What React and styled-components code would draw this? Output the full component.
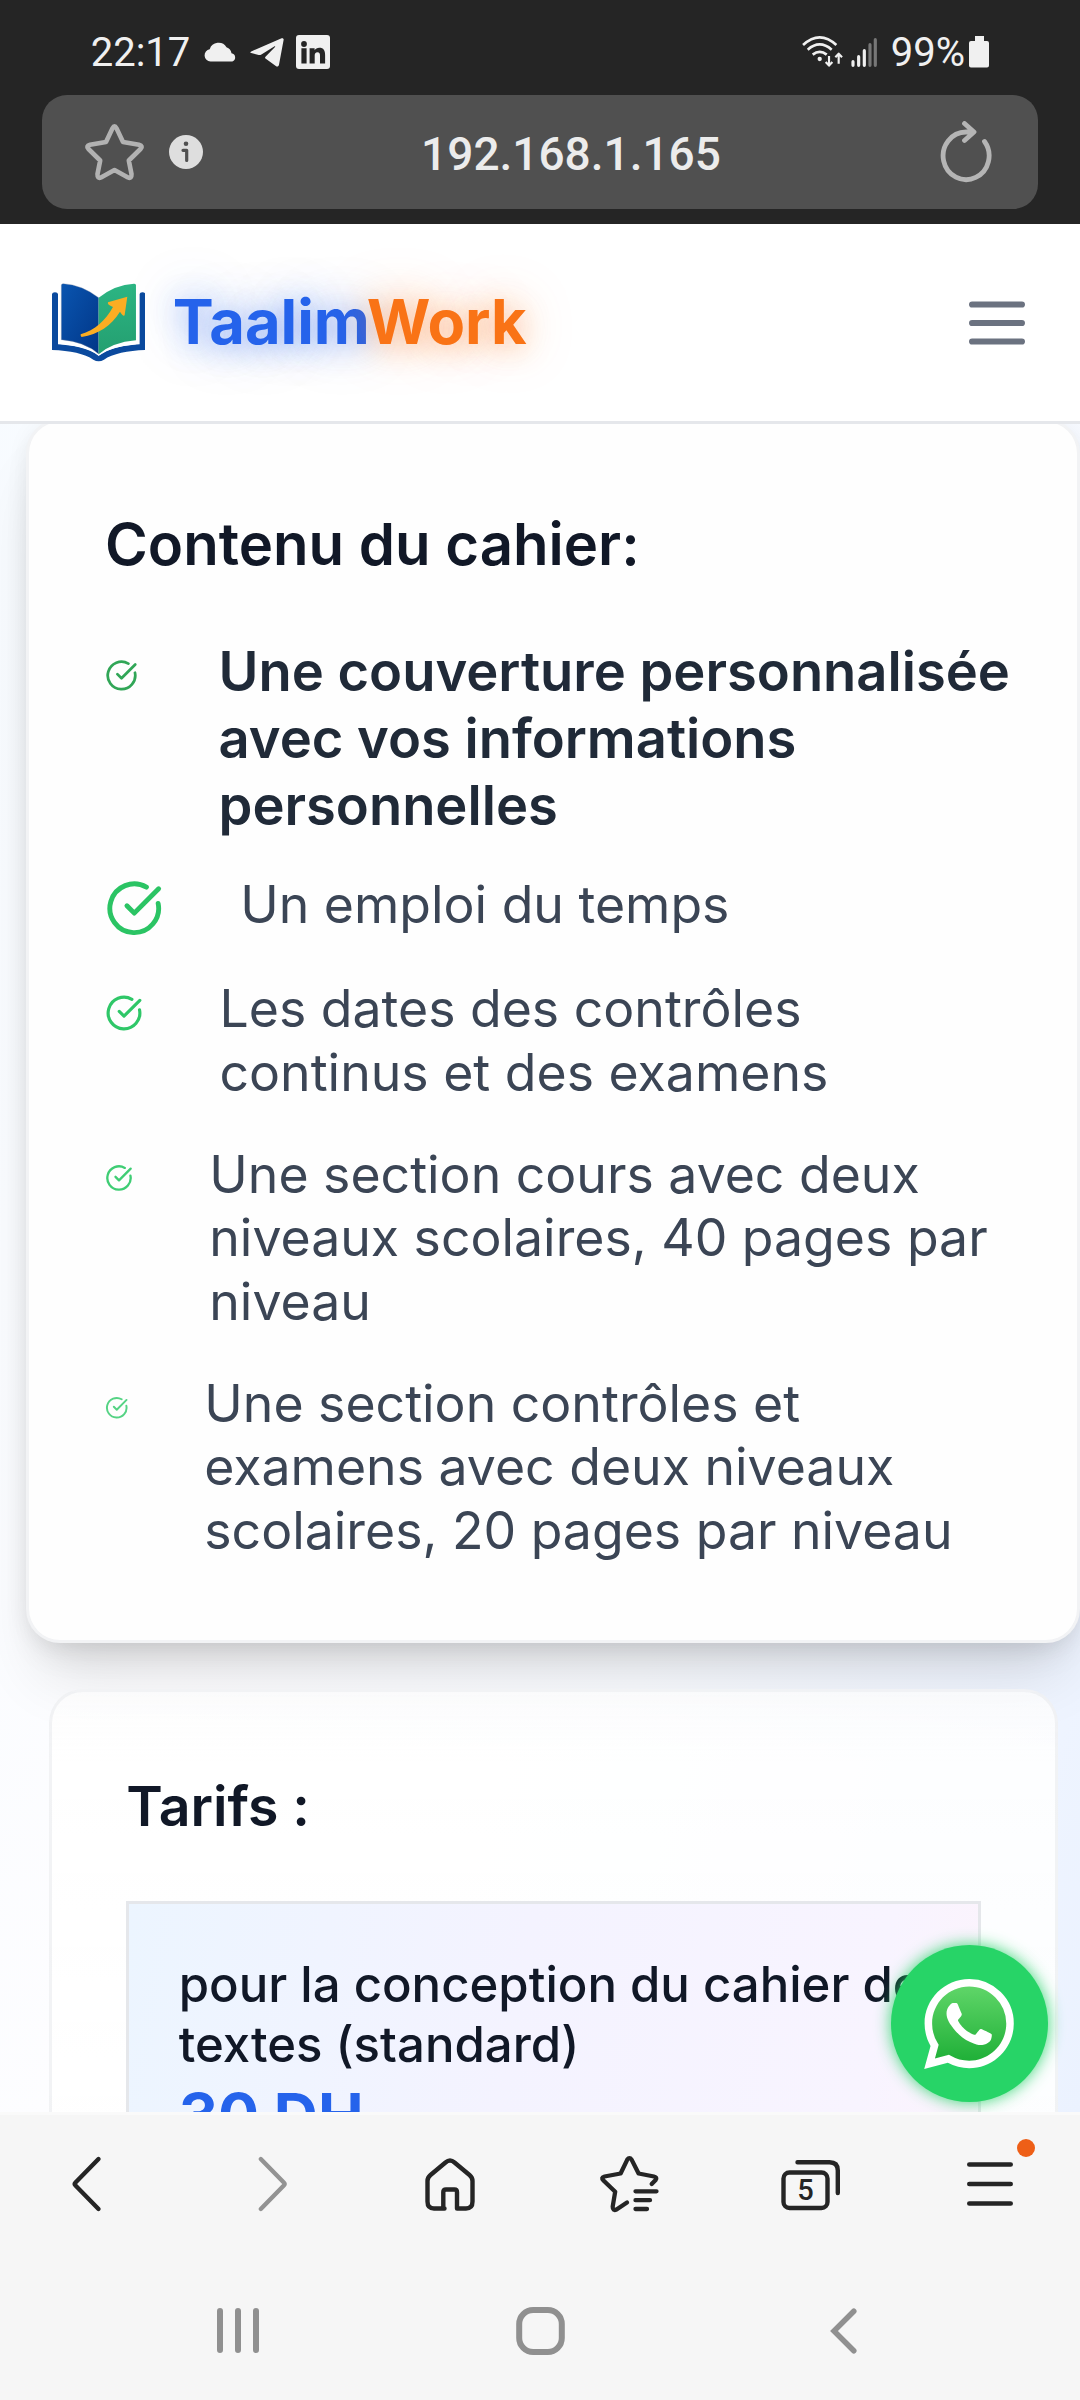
import React from "react";
import styled, { createGlobalStyle } from "styled-components";
import { CircleCheckBig } from "lucide-react";

const Global = createGlobalStyle`
  * { box-sizing: border-box; }
  body { margin: 0; background: #f6f6f6; }
  h3, p, ul { margin: 0; padding: 0; }
  svg { display: block; flex: none; }
`;

const Phone = styled.div`
  width: 1080px;
  height: 2400px;
  display: flex;
  flex-direction: column;
  overflow: hidden;
  background: #f6f6f6;
  font-family: Inter, "Liberation Sans", sans-serif;
`;

/* ---------- browser top ---------- */
const Chrome = styled.header`
  height: 224px;
  flex: none;
  background: #252525;
  font-family: Roboto, "Liberation Sans", sans-serif;
`;
const StatusBar = styled.div`
  height: 95px;
  padding: 9px 91px 0 90.7px;
  display: flex;
  align-items: center;
  justify-content: space-between;
  color: #f0f0f0;
  font-size: 40px;
  line-height: 47px;
`;
const StatusGroup = styled.div`
  display: flex;
  align-items: center;
  gap: ${(p) => p.$gap}px;
`;
const Clock = styled.span`
  margin-right: 2px;
`;
const Percent = styled.span`
  margin: 0 -6px 0 2px;
`;
const AddressBar = styled.div`
  height: 114px;
  margin: 0 42px;
  padding: 0 46px 0 42px;
  border-radius: 25px;
  background: #505050;
  display: grid;
  grid-template-columns: 120px 1fr 120px;
  align-items: center;
`;
const AddressIcons = styled.div`
  display: flex;
  align-items: center;
  gap: 24px;
`;
const Url = styled.span`
  padding: 3px 0 0 66px;
  color: #ececec;
  font-size: 46px;
  font-weight: 500;
  line-height: 54px;
  text-align: center;
`;
const Reload = styled.div`
  display: flex;
  justify-content: flex-end;
`;

/* ---------- web page ---------- */
const Viewport = styled.main`
  position: relative;
  height: 1888px;
  flex: none;
  overflow: hidden;
  background: linear-gradient(105deg, #f7fbff 0%, #fdfdff 35%, #f9fbff 65%, #ebf2ff 100%);
`;
const Nav = styled.nav`
  position: relative;
  z-index: 1;
  height: 200px;
  padding: 0 55px 0 52px;
  border-bottom: 3px solid #e5e7eb;
  background: #fff;
  display: flex;
  align-items: center;
  justify-content: space-between;
`;
const Brand = styled.div`
  display: flex;
  align-items: center;
  gap: 27.5px;
`;
const BrandName = styled.span`
  margin-top: -2px;
  font-size: 61.4px;
  line-height: 76px;
  font-weight: 700;
  white-space: nowrap;
`;
const BrandPart = styled.span`
  color: ${(p) => p.$color};
  text-shadow: 0 0 52px ${(p) => p.$glow}, 0 4px 28px ${(p) => p.$glow};
`;
const Card = styled.section`
  position: relative;
  width: ${(p) => p.$width}px;
  margin: ${(p) => p.$margin};
  padding: ${(p) => p.$padding};
  border: 3px solid rgba(229, 231, 235, 0.5);
  border-radius: 34px;
  background: ${(p) => (p.$raised ? "#fefefe" : "linear-gradient(#fcfcfccc, #ffffffd9 70px, #ffffffe0)")};
  box-shadow: ${(p) =>
    p.$raised
      ? "0 46px 64px -16px rgba(0,0,0,.12), 0 18px 36px -14px rgba(0,0,0,.12), 0 2px 22px rgba(0,0,0,.05)"
      : "none"};
`;
const Title = styled.h3`
  color: #111827;
  font-size: ${(p) => p.$size}px;
  line-height: ${(p) => p.$line}px;
  font-weight: 600;
`;
const Contents = styled.ul`
  margin-top: 58.9px;
  list-style: none;
`;
const Entry = styled.li`
  display: flex;
  align-items: flex-start;
  margin-bottom: ${(p) => p.$after}px;
  color: ${(p) => (p.$strong ? "#202a38" : "#3b4555")};
  font-size: ${(p) => (p.$strong ? 54.3 : 51.75)}px;
  line-height: ${(p) => (p.$strong ? 67.2 : 63.4)}px;
  font-weight: ${(p) => (p.$strong ? 600 : 400)};
`;
const Check = styled.span`
  width: ${(p) => p.$column}px;
  height: 63px;
  margin-top: ${(p) => p.$drop}px;
  flex: none;
  display: flex;
  align-items: center;
  color: ${(p) => p.$color};
`;
const PriceBox = styled.div`
  height: 300px;
  margin-top: 61.2px;
  padding: 50px 40px 0 49.5px;
  border: 3px solid #e5e7eb;
  background: linear-gradient(100deg, #ecf5ff, #f4f3ff 45%, #f8f4ff 85%, #fcf3fc);
`;
const PriceLabel = styled.p`
  color: #111827;
  font-size: 49.1px;
  line-height: 60px;
  font-weight: 500;
`;
const Price = styled.p`
  margin-top: 7px;
  color: #2563eb;
  font-size: 61.1px;
  line-height: 68px;
  font-weight: 700;
`;
const ChatButton = styled.button`
  position: absolute;
  left: 890.5px;
  top: 1721px;
  width: 157px;
  height: 157px;
  padding: 0;
  border: 0;
  border-radius: 50%;
  background: #27d467;
  box-shadow: 0 0 16px rgba(37, 211, 102, 0.9);
  display: flex;
  align-items: center;
  justify-content: center;
`;

/* ---------- bottom bars ---------- */
const Toolbar = styled.div`
  height: 143px;
  flex: none;
  border-top: 3px solid #fafafa;
  display: grid;
  grid-template-columns: repeat(6, 180px);
`;
const Tool = styled.div`
  position: relative;
  padding-top: 29px;
  display: flex;
  justify-content: center;
`;
const Badge = styled.span`
  position: absolute;
  left: 117px;
  top: 24px;
  width: 18px;
  height: 18px;
  border-radius: 50%;
  background: #ee5f17;
`;
const SystemNav = styled.div`
  height: 145px;
  padding: 6px 85px 0 86px;
  display: grid;
  grid-template-columns: repeat(3, 1fr);
  align-items: center;
  justify-items: center;
`;

const stroke = (color, width) => ({
  fill: "none",
  stroke: color,
  strokeWidth: width,
  strokeLinecap: "round",
  strokeLinejoin: "round",
});

const Cloud = () => (
  <svg width="33" height="20" viewBox="0 0 33 20" fill="#f0f0f0">
    <path d="M6.5 19.5a6.2 6.2 0 0 1-.8-12.3A9.3 9.3 0 0 1 22.5 5.2a7.4 7.4 0 0 1 5 6 4.3 4.3 0 0 1 .8 8.3z" />
  </svg>
);
const Plane = () => (
  <svg width="34" height="29" viewBox="0 0 34 29" fill="#f0f0f0">
    <path d="M1.2 13.4 31.6.3c1.3-.5 2.3.3 2 1.8L29 26.8c-.4 1.8-1.7 2.3-3.2 1.3l-10.3-7.5c-.6-.5-.6-1.3 0-1.9L25 8.9c.5-.6-.1-1-.8-.5L11 16.7c-.7.4-1.5.5-2.3.3L1.2 15.1c-1.2-.3-1.2-1.2 0-1.7z" />
  </svg>
);
const LinkedIn = () => (
  <svg width="34" height="34" viewBox="0 0 34 34">
    <rect width="34" height="34" rx="3" fill="#f0f0f0" />
    <g fill="#252525">
      <circle cx="8" cy="9" r="2.9" />
      <path d="M5.4 13.2h5.2V28.5H5.4zM13.6 13.2h5v2.1c.9-1.5 2.6-2.5 4.7-2.5 4.3 0 5.8 2.7 5.8 7.1v8.6H24v-7.7c0-2-.5-3.5-2.5-3.5-2.1 0-2.8 1.5-2.8 3.5v7.7h-5.1z" />
    </g>
  </svg>
);
const Signal = () => (
  <svg width="76.7" height="33.3" viewBox="34 40 230 100">
    <g {...stroke("#f0f0f0", 8)} strokeLinecap="butt">
      <path d="M37 70Q87 24 137 70M51 84Q87 53 123 84M66 99Q87 82 108 99" />
    </g>
    <circle cx="87" cy="112" r="6.5" fill="#f0f0f0" />
    <g {...stroke("#f0f0f0", 6.5)} strokeLinecap="butt">
      <path d="M115 103v27M105 121l10 11 10-11M144 126V99M134 107l10-11 10 11" />
    </g>
    <g {...stroke("#f0f0f0", 9.5)}>
      <path d="M187 120v11M204 105v26M221 87v44" />
      <path stroke="#777" d="M238 69v62M254 54v77" />
    </g>
  </svg>
);
const Battery = () => (
  <svg width="20" height="32" viewBox="0 0 20 32" fill="#f0f0f0">
    <path d="M6 0h9v5h3a2 2 0 0 1 2 2v22.5a2 2 0 0 1-2 2H2a2 2 0 0 1-2-2V7a2 2 0 0 1 2-2h4z" />
  </svg>
);
const Star = () => (
  <svg width="61" height="60" viewBox="83.5 122 61 60" {...stroke("#b2b2b2", 4.6)}>
    <path d="M112 128.3Q114 124.5 116 128.3L122.5 142L138.5 144.8Q143 146 140 149L128.3 160.5L131 174Q131.2 179.2 127.5 177.5L114 170L100.5 177.5Q96.8 179.2 97 174L99.7 160.5L88 149Q85 146 89.5 144.8L105.5 142Z" />
  </svg>
);
const Info = () => (
  <svg width="34" height="34" viewBox="0 0 34 34">
    <circle cx="17" cy="17" r="17" fill="#dedede" />
    <circle cx="17" cy="8.8" r="2.3" fill="#505050" />
    <path d="M14 15.3h3.7v10.2" {...stroke("#505050", 3.2)} />
  </svg>
);
const ReloadIcon = () => (
  <svg width="52" height="62" viewBox="940 120 52 62" {...stroke("#b5b5b5", 4.8)}>
    <path d="M984.5 140.5A23 23.8 0 1 1 966 131H973M964.5 122.5L974 131L964.5 139.5" />
  </svg>
);
const Logo = () => (
  <svg width="93.3" height="79" viewBox="36 40 280 237">
    <defs>
      <linearGradient id="cover" x1="0" y1="0" x2="1" y2="1">
        <stop offset="0" stopColor="#0a55b0" />
        <stop offset="1" stopColor="#013687" />
      </linearGradient>
      <linearGradient id="leaf" x1="0" y1="0" x2="0" y2="1">
        <stop offset="0" stopColor="#2cb583" />
        <stop offset="1" stopColor="#249f70" />
      </linearGradient>
    </defs>
    <path
      fill="#0b4a9e"
      d="M36 73Q37 68 45 68Q53 68 54 73V224C100 227 145 236 176 258C207 236 252 227 299 224V73Q300 68 307 68Q315 68 316 73V241C265 243 217 252 192 270Q176 279 160 270C135 252 90 243 36 241Z"
    />
    <path fill="#fff" d="M64 210Q130 218 176 256Q225 218 288 211V224Q215 230 176 258Q140 230 64 224Z" />
    <path fill="url(#cover)" stroke="#8590a4" strokeWidth="1" d="M64 46Q65 42 70 42Q125 45 176 84V253Q135 216 64 210Z" />
    <path fill="url(#leaf)" d="M288 46Q287 42 282 42Q225 45 176 84V254Q217 218 288 212Z" />
    <path fill="#fbad23" d="M122 194C165 181 196 153 219 112Q201 106 204 98L262 81L254 137Q250 142 240 126C214 168 175 194 125 202Q121 200 122 194Z" />
  </svg>
);
const MenuLines = () => (
  <svg width="56" height="44" viewBox="0 0 56 44" {...stroke("#6b7280", 6.2)}>
    <path d="M3.1 3.5h49.8M3.1 22h49.8M3.1 40.5h49.8" />
  </svg>
);
const WhatsApp = () => (
  <svg width="90" height="90" viewBox="0 0 24 24">
    <defs>
      <linearGradient id="bubble" x1="0" y1="0" x2="0" y2="1">
        <stop offset="0.05" stopColor="#5fd568" />
        <stop offset="0.95" stopColor="#20b038" />
      </linearGradient>
    </defs>
    <path fill="url(#bubble)" d="M12.05 1A10.9 10.9 0 0 0 2.7 17.5L1.5 22.5l5-1.2A10.9 10.9 0 1 0 12.05 1z" />
    <path
      fill="#fff"
      d="M17.472 14.382c-.297-.149-1.758-.867-2.03-.967-.273-.099-.471-.148-.67.15-.197.297-.767.966-.94 1.164-.173.199-.347.223-.644.075-.297-.15-1.255-.463-2.39-1.475-.883-.788-1.48-1.761-1.653-2.059-.173-.297-.018-.458.13-.606.134-.133.298-.347.446-.52.149-.174.198-.298.298-.497.099-.198.05-.371-.025-.52-.075-.149-.669-1.612-.916-2.207-.242-.579-.487-.5-.669-.51-.173-.008-.371-.01-.57-.01-.198 0-.52.074-.792.372-.272.297-1.04 1.016-1.04 2.479 0 1.462 1.065 2.875 1.213 3.074.149.198 2.096 3.2 5.077 4.487.709.306 1.262.489 1.694.625.712.227 1.36.195 1.871.118.571-.085 1.758-.719 2.006-1.413.248-.694.248-1.289.173-1.413-.074-.124-.272-.198-.57-.347m-5.421 7.403h-.004a9.87 9.87 0 01-5.031-1.378l-.361-.214-3.741.982.998-3.648-.235-.374a9.86 9.86 0 01-1.51-5.26c.001-5.45 4.436-9.884 9.888-9.884 2.64 0 5.122 1.03 6.988 2.898a9.825 9.825 0 012.893 6.994c-.003 5.45-4.437 9.884-9.885 9.884m8.413-18.297A11.815 11.815 0 0012.05 0C5.495 0 .16 5.335.157 11.892c0 2.096.547 4.142 1.588 5.945L.057 24l6.305-1.654a11.882 11.882 0 005.683 1.448h.005c6.554 0 11.89-5.335 11.893-11.893a11.821 11.821 0 00-3.48-8.413z"
    />
  </svg>
);

/* Toolbar glyphs share an 80x80 canvas centred in their column. */
const ToolIcon = ({ color = "#252525", width = 4.4, children }) => (
  <svg width="80" height="80" viewBox="0 0 80 80" {...stroke(color, width)}>
    {children}
  </svg>
);

const entries = [
  { text: "Une couverture personnalisée avec vos informations personnelles", icon: 33, column: 113.5, color: "#31a657", strong: true, after: 33.4 },
  { text: "Un emploi du temps", icon: 58.5, column: 135.2, color: "#2bc464", after: 37.5 },
  { text: "Les dates des contrôles continus et des examens", icon: 38, column: 114.5, color: "#2fc768", after: 38.8 },
  { text: "Une section cours avec deux niveaux scolaires, 40 pages par niveau", icon: 28, column: 104.3, color: "#3fcd74", after: 39 },
  { text: "Une section contrôles et examens avec deux niveaux scolaires, 20 pages par niveau", icon: 23.5, column: 99.3, color: "#55d384", after: 0 },
];

export default function App() {
  return (
    <Phone>
      <Global />
      <Chrome>
        <StatusBar>
          <StatusGroup $gap={12.2}>
            <Clock>22:17</Clock>
            <Cloud />
            <Plane />
            <LinkedIn />
          </StatusGroup>
          <StatusGroup $gap={10}>
            <Signal />
            <Percent>99%</Percent>
            <Battery />
          </StatusGroup>
        </StatusBar>
        <AddressBar>
          <AddressIcons>
            <Star />
            <Info />
          </AddressIcons>
          <Url>192.168.1.165</Url>
          <Reload>
            <ReloadIcon />
          </Reload>
        </AddressBar>
      </Chrome>

      <Viewport>
        <Nav>
          <Brand>
            <Logo />
            <BrandName>
              <BrandPart $color="#2563eb" $glow="rgba(37,99,235,.36)">Taalim</BrandPart>
              <BrandPart $color="#f97316" $glow="rgba(249,115,22,.36)">Work</BrandPart>
            </BrandName>
          </Brand>
          <MenuLines />
        </Nav>

        <Card $raised $width={1054} $margin="-5px 0 0 26px" $padding="86.8px 65px 78.2px 76px">
          <Title $size={58.1} $line={70}>Contenu du cahier:</Title>
          <Contents>
            {entries.map((e) => (
              <Entry key={e.text} $strong={e.strong} $after={e.after}>
                <Check $column={e.column} $color={e.color} $drop={e.strong ? 6 : 4}>
                  <CircleCheckBig size={e.icon} strokeWidth={2} />
                </Check>
                <span>{e.text}</span>
              </Entry>
            ))}
          </Contents>
        </Card>

        <Card $width={1009} $margin="45.5px 0 0 49px" $padding="79.6px 74px 80px 74.2px">
          <Title $size={55.4} $line={68}>Tarifs :</Title>
          <PriceBox>
            <PriceLabel>pour la conception du cahier de textes (standard)</PriceLabel>
            <Price>30 DH</Price>
          </PriceBox>
        </Card>

        <ChatButton aria-label="WhatsApp">
          <WhatsApp />
        </ChatButton>
      </Viewport>

      <Toolbar>
        <Tool>
          <ToolIcon><path d="M48.5 15L25.500 38.5Q24 40 25.500 41.5L48.5 65" /></ToolIcon>
        </Tool>
        <Tool>
          <ToolIcon color="#939393"><path d="M30.8 15L53.8 38.5Q55.3 40 53.8 41.5L30.8 65" /></ToolIcon>
        </Tool>
        <Tool>
          <ToolIcon><path d="M34.5 64.5H24Q17.5 64.5 17.5 57.5V37Q17.5 33.5 20.5 31L35.5 18.5Q40 14.5 44.5 18.5L59.5 31Q62.5 33.5 62.5 37V57.5Q62.5 64.5 56 64.5H47V48Q47 45.5 44.5 45.5H36Q33.3 45.5 33.3 48V64.5Z" /></ToolIcon>
        </Tool>
        <Tool>
          <ToolIcon width={4.3}>
            <path d="M61.7 40L65.6 35.9Q67.5 33.2 64 32.5L48.6 29.5L41.6 15.6Q39.5 12.5 37.3 15.6L30.6 29.5L14.5 32.5Q10.5 33.5 13.5 36.5L25.2 47.7L22.7 62.5Q22.6 67.3 26.5 65.5L37 58.5" />
            <path d="M45.5 47.3H66.5M45.5 56.2H60M45.5 65H57" />
          </ToolIcon>
        </Tool>
        <Tool>
          <ToolIcon>
            <rect x="13.5" y="28.5" width="44" height="35.5" rx="6" />
            <path d="M27.5 18.3H59.5Q67.8 18.3 67.8 26.5V49" />
            <text x="35.6" y="56" textAnchor="middle" fill="#252525" stroke="none" fontFamily="Roboto, sans-serif" fontWeight="500" fontSize="29">5</text>
          </ToolIcon>
        </Tool>
        <Tool>
          <ToolIcon width={4.6}><path d="M19.3 20.5H60.7M19.3 40H60.7M19.3 59.5H60.7" /></ToolIcon>
          <Badge />
        </Tool>
      </Toolbar>
      <SystemNav>
        <svg width="42" height="45" viewBox="0 0 42 45" {...stroke("#909090", 6)}>
          <path d="M3 3v39M21 3v39M39 3v39" />
        </svg>
        <svg width="49" height="48" viewBox="0 0 49 48" {...stroke("#909090", 6)}>
          <rect x="3.2" y="3" width="42.6" height="42" rx="14" />
        </svg>
        <svg width="27" height="46" viewBox="0 0 27 46" {...stroke("#909090", 5.5)} strokeLinejoin="miter">
          <path d="M23.8 3.2L4 23L23.8 42.8" />
        </svg>
      </SystemNav>
    </Phone>
  );
}
